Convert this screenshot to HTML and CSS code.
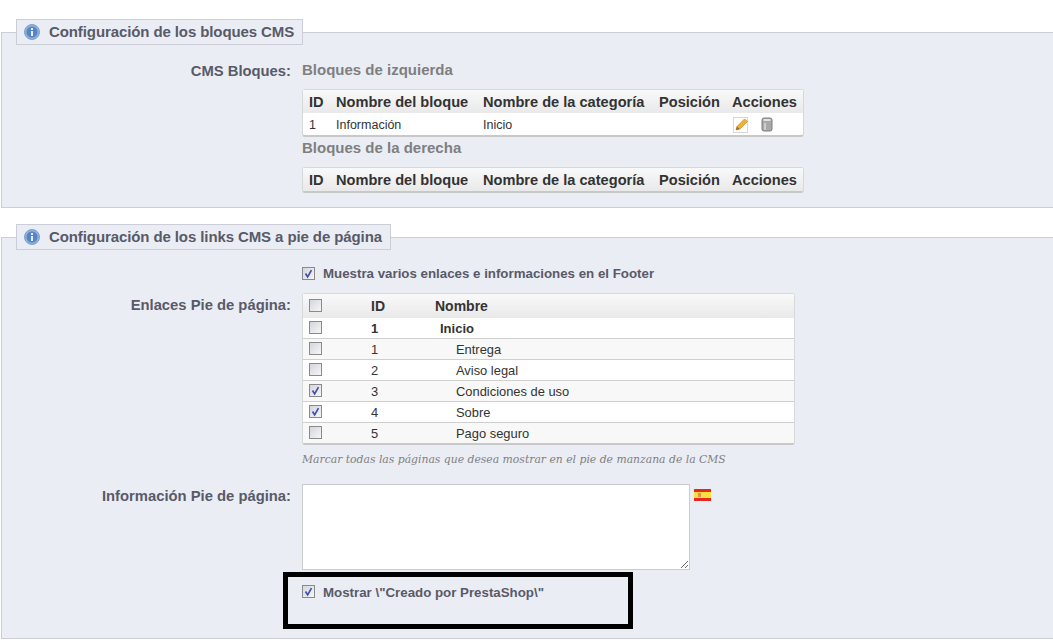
FILE: index.html
```html
<!DOCTYPE html>
<html lang="es">
<head>
  <meta charset="UTF-8" />
  <title>Configuración CMS</title>
  <link rel="stylesheet" href="styles.css">
</head>
<body>
  <svg class="defs" width="0" height="0">
    <symbol id="check" viewBox="0 0 13 13">
      <path d="M3 6.5 L5.5 10.5 L10 2.5" fill="none" stroke="#3f51a8" stroke-width="2"/>
    </symbol>
    <symbol id="info" viewBox="0 0 16 16">
      <circle cx="8" cy="8" r="7.5" fill="#8fb0d8" stroke="#7f9fca"/>
      <circle cx="8" cy="8" r="5.5" fill="#5585c4"/>
      <rect x="7" y="7" width="2" height="5" fill="#e8eef8"/>
      <rect x="7" y="4" width="2" height="2" fill="#e8eef8"/>
    </symbol>
  </svg>

  <!-- Bloques -->
  <fieldset class="panel panel-first">
    <legend><svg class="icon-info"><use href="#info"/></svg>Configuración de los bloques CMS</legend>
    <div class="row">
      <div class="row-label">CMS Bloques:</div>
      <div class="row-body">
        <h4 class="sub">Bloques de izquierda</h4>
        <table class="tbl tbl-blocks">
          <tr><th class="c-id">ID</th><th class="c-name">Nombre del bloque</th><th class="c-cat">Nombre de la categoría</th><th class="c-pos">Posición</th><th>Acciones</th></tr>
          <tr>
            <td>1</td><td>Información</td><td>Inicio</td><td></td>
            <td class="actions">
              <svg class="icon-edit" viewBox="0 0 16 16">
                <rect x="0.5" y="0.5" width="14" height="15" fill="#fff" stroke="#d8d8d8"/>
                <path d="M3 13 L4 9.5 L11.5 2 L14.5 4.5 L7 12 Z" fill="#f0b030" stroke="#c98a20" stroke-width="0.7"/>
                <path d="M3 13 L4 9.5 L6.5 12 Z" fill="#8a6a40"/>
              </svg>
              <svg class="icon-trash" viewBox="0 0 12 15">
                <rect x="1" y="1" width="10" height="13" rx="2" fill="#a9a9a6" stroke="#7c7c7c"/>
                <rect x="2.5" y="2" width="7" height="2" fill="#e2e2e2"/>
                <path d="M4 6 V13" stroke="#dcdcdc" stroke-width="1.5"/>
              </svg>
            </td>
          </tr>
        </table>
        <h4 class="sub sub-next">Bloques de la derecha</h4>
        <table class="tbl tbl-blocks">
          <tr><th class="c-id">ID</th><th class="c-name">Nombre del bloque</th><th class="c-cat">Nombre de la categoría</th><th class="c-pos">Posición</th><th>Acciones</th></tr>
        </table>
      </div>
    </div>
  </fieldset>

  <!-- Pie de pagina -->
  <fieldset class="panel panel-second">
    <legend><svg class="icon-info"><use href="#info"/></svg>Configuración de los links CMS a pie de página</legend>

    <div class="row check-row">
      <div class="row-label"></div>
      <div class="row-body check-line">
        <span class="cb"><svg><use href="#check"/></svg></span>
        <span>Muestra varios enlaces e informaciones en el Footer</span>
      </div>
    </div>

    <div class="row links-row">
      <div class="row-label">Enlaces Pie de página:</div>
      <div class="row-body">
        <table class="tbl tbl-links">
          <tr><th class="c-check"><span class="cb"></span></th><th class="c-lid">ID</th><th>Nombre</th></tr>
          <tr class="strong"><td><span class="cb"></span></td><td>1</td><td class="indent-1">Inicio</td></tr>
          <tr class="alt"><td><span class="cb"></span></td><td>1</td><td class="indent-2">Entrega</td></tr>
          <tr><td><span class="cb"></span></td><td>2</td><td class="indent-2">Aviso legal</td></tr>
          <tr class="alt"><td><span class="cb"><svg><use href="#check"/></svg></span></td><td>3</td><td class="indent-2">Condiciones de uso</td></tr>
          <tr><td><span class="cb"><svg><use href="#check"/></svg></span></td><td>4</td><td class="indent-2">Sobre</td></tr>
          <tr class="alt"><td><span class="cb"></span></td><td>5</td><td class="indent-2">Pago seguro</td></tr>
        </table>
        <p class="hint">Marcar todas las páginas que desea mostrar en el pie de manzana de la CMS</p>
      </div>
    </div>

    <div class="row info-row">
      <div class="row-label">Información Pie de página:</div>
      <div class="row-body text-line">
        <textarea class="area"></textarea>
        <svg class="flag" viewBox="0 0 17 12">
          <rect width="17" height="12" fill="#e8281c"/>
          <rect y="3" width="17" height="6" fill="#f8e040"/>
          <rect x="4" y="4" width="3" height="4" fill="#e09050"/>
        </svg>
      </div>
    </div>

    <div class="row powered-row">
      <div class="row-label"></div>
      <div class="row-body check-line">
        <span class="cb"><svg><use href="#check"/></svg></span>
        <span>Mostrar \"Creado por PrestaShop\"</span>
      </div>
      <div class="marker"></div>
    </div>
  </fieldset>
</body>
</html>
```

FILE: styles.css
```css
html, body { margin: 0; padding: 0; background: #fff; }
body { font-family: "Liberation Sans", Arial, sans-serif; font-size: 12px; color: #585a69; overflow: hidden; height: 642px; }
.defs { position: absolute; }

.panel { display: block; margin: 0 -20px 0 1px; padding: 0; border: 1px solid #ccced7; background: #ebedf4; min-width: 0; }
.panel-first { margin-top: 19px; height: 187px; box-sizing: content-box; }
.panel-second { margin-top: 16px; height: 413px; border-right: 0; }
.panel legend { display: flex; align-items: center; box-sizing: border-box; height: 26px; margin-left: 14px; padding: 0 8px 2px 7px; border: 1px solid #ccced7; background: #ebedf4; font-size: 15px; font-weight: bold; letter-spacing: -0.1px; }
.icon-info { width: 16px; height: 16px; margin-right: 9px; margin-top: 2px; }

.row { display: flex; position: relative; }
.row-label { flex: none; box-sizing: content-box; width: 278px; padding: 1px 11px 0; text-align: right; font-size: 14.8px; font-weight: bold; }
.row-body { flex: 1; min-width: 0; }

.panel-first .row { padding-top: 17px; }
.sub { margin: 0 0 11px; font-size: 15px; font-weight: bold; color: #7f7f7f; line-height: 16px; }
.sub-next { margin: 3px 0 11px; }

.tbl { border-collapse: separate; border-spacing: 0; background: #fff; border: 1px solid #d8d8d8; border-bottom: 2px solid #c8c8c8; border-radius: 3px; color: #333; }
.tbl th { background: linear-gradient(#f9f9f9, #e9e9e9); color: #333; font-size: 14.6px; font-weight: bold; text-align: left; white-space: nowrap; }
.tbl td { white-space: nowrap; }

.tbl-blocks { width: 502px; }
.tbl-blocks th { height: 23px; padding: 0 0 0 6px; }
.tbl-blocks td { height: 21px; padding: 1px 0 0 6px; font-size: 12.5px; }
.c-id { width: 21px; }
.c-name { width: 141px; }
.c-cat { width: 170px; }
.c-pos { width: 67px; }
.actions { vertical-align: middle; }
.icon-edit { width: 16px; height: 16px; vertical-align: middle; margin: 0 9px 0 1px; }
.icon-trash { width: 12px; height: 15px; vertical-align: middle; }

.check-line { display: flex; align-items: center; gap: 8px; font-size: 13.3px; font-weight: bold; }
.cb { display: inline-block; flex: none; box-sizing: border-box; width: 13px; height: 13px; border: 1px solid #8a8a8a; background: linear-gradient(135deg, #d4d6de, #f6f6f6); vertical-align: middle; }
.cb svg { display: block; width: 11px; height: 11px; }

.check-row { padding-top: 16px; }
.links-row { padding-top: 12px; }
.links-row .row-label, .info-row .row-label { padding-top: 4px; }
.tbl-links { width: 493px; }
.tbl-links th { height: 24px; padding: 0; font-size: 14px; }
.tbl-links td { height: 20px; padding: 0; border-top: 1px solid #d0d0d0; font-size: 12.9px; }
.tbl-links .cb { margin: 0 0 2px 6px; }
.c-check { width: 68px; }
.c-lid { width: 64px; }
.tbl-links .alt td { background: #f8f8f8; }
.tbl-links .strong td { font-weight: bold; font-size: 13px; border-top: 0; height: 20px; }
.indent-1 { padding-left: 5px !important; }
.indent-2 { padding-left: 21px !important; }
.hint { margin: 7px 0 0; font-family: "DejaVu Serif", "Liberation Serif", serif; font-style: italic; font-size: 10.8px; line-height: 15px; color: #7f7f7f; }

.info-row { padding-top: 17px; }
.text-line { display: flex; align-items: flex-start; }
.area { display: block; box-sizing: border-box; width: 388px; height: 86px; margin: 0; border: 1px solid #ccc; background: #fff; }
.flag { width: 17px; height: 12px; margin: 5px 0 0 4px; }

.powered-row { padding-top: 15px; }
.powered-row .check-line { align-items: flex-start; }
.marker { position: absolute; left: 281px; top: 2px; width: 350px; height: 57px; box-sizing: border-box; border: 5px solid #000; }
```
